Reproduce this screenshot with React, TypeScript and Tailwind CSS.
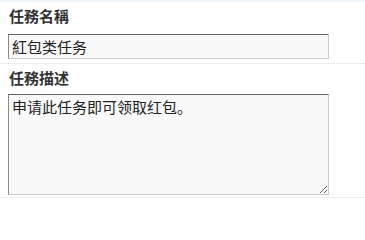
const font = { fontFamily: '"Noto Sans CJK SC", "Noto Sans CJK TC", sans-serif' };

function Field({
  label,
  children,
  className,
}: {
  label: string;
  children: React.ReactNode;
  className?: string;
}) {
  return (
    <div className={className}>
      <div className="h-[18px] pl-[9px] text-[15px] font-bold leading-[18px] text-[#333]">{label}</div>
      {children}
    </div>
  );
}

export default function App() {
  return (
    <div className="h-[205px] w-[365px] bg-white" style={font}>
      <div className="h-[2px] bg-[#eef4f8]" />
      <Field label="任務名稱" className="pt-[5px]">
        <input
          defaultValue="紅包类任务"
          className="mt-[9px] ml-[8px] block h-[25px] w-[321px] border border-t-[#666] border-l-[#888] border-r-[#ccc] border-b-[#ccc] bg-[#f9f9f9] px-[3px] text-[15px] leading-[23px] text-[#222] outline-none"
        />
      </Field>
      <div className="mt-[4px] border-b border-dotted border-[#ddd]" />
      <Field label="任務描述" className="pt-[5px]">
        <textarea
          defaultValue="申请此任务即可领取红包。"
          className="mt-[7px] ml-[8px] block h-[101px] w-[321px] resize border border-t-[#666] border-l-[#888] border-r-[#ccc] border-b-[#ccc] bg-[#f9f9f9] px-[3px] py-[3px] text-[15px] leading-[18px] text-[#222] outline-none"
        />
      </Field>
      <div className="mt-[2px] border-b border-[#eee]" />
    </div>
  );
}
